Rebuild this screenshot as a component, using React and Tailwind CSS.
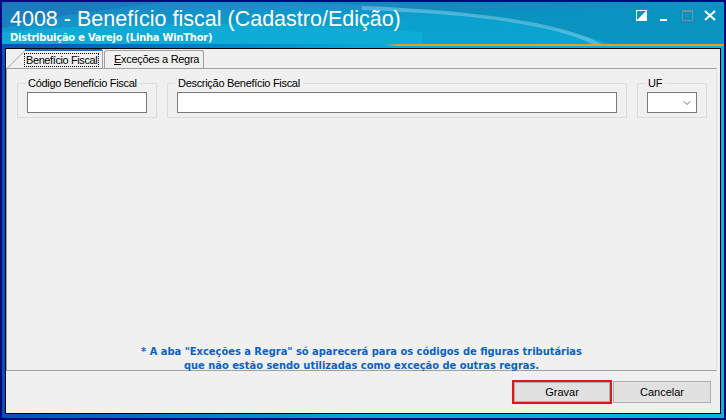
import { ChevronDown } from "lucide-react"

const font = { fontFamily: '"Liberation Sans", Arial, sans-serif' }
const boldFont = { fontFamily: '"DejaVu Sans Condensed", "DejaVu Sans", sans-serif' }

function TitleBar() {
  return (
    <div className="relative h-[42px] bg-gradient-to-br from-[#1c82c2] via-[#0aa0cf] to-[#0aa6d0] overflow-hidden">
      <svg className="absolute inset-0" width="722" height="42" viewBox="0 0 722 42">
        <path d="M0 30 C120 18 260 20 420 30 L420 42 L0 42 Z" fill="#10b6de" opacity="0.55" />
        <path d="M300 0 C420 6 520 14 610 42 L722 42 L722 0 Z" fill="#0a80ae" opacity="0.45" />
        <path d="M360 4 C470 8 560 20 600 42 L590 42 C550 22 470 12 360 8 Z" fill="#bfeaf6" opacity="0.35" />
        <path d="M0 0 L160 0 C100 8 40 16 0 26 Z" fill="#1b6ab4" opacity="0.45" />
      </svg>
      <div className="relative pl-[8px] pt-[5px] text-white">
        <div className="text-[21.5px] leading-[24px] whitespace-nowrap">4008 - Benefício fiscal (Cadastro/Edição)</div>
        <div className="text-[11px] leading-[13px] font-bold tracking-[-0.2px] whitespace-nowrap" style={boldFont}>
          Distribuição e Varejo (Linha WinThor)
        </div>
      </div>
      <div className="absolute right-[8px] top-[8px] flex items-center gap-[9px]">
        <svg width="11" height="11" viewBox="0 0 11 11">
          <rect x="0.5" y="0.5" width="10" height="10" fill="none" stroke="#fff" />
          <path d="M0 11 L11 0 L11 11 Z" fill="#fff" />
        </svg>
        <div className="w-[14px] h-[11px] flex items-end justify-center">
          <div className="w-[7px] h-[2px] bg-white" />
        </div>
        <div className="w-[16px] h-[11px] flex justify-center">
          <div className="w-[11px] h-[11px] border border-[#7a8c98] border-t-[2px]" />
        </div>
        <svg width="12" height="11" viewBox="0 0 12 11">
          <path d="M1 1 L11 10 M11 1 L1 10" stroke="#fff" strokeWidth="2" />
        </svg>
      </div>
    </div>
  )
}

function GroupBox({ label, className, children }) {
  return (
    <div className={"relative border border-[#dcdcdc] pt-[8px] pb-[4px] px-[9px] " + className}>
      <span className="absolute left-[7px] -top-[7px] px-[3px] bg-[#f0f0f0] text-[11px] leading-[13px] tracking-[-0.3px] whitespace-nowrap text-black">
        {label}
      </span>
      {children}
    </div>
  )
}

function Tabs() {
  return (
    <div className="flex items-end h-[19px] pl-[1px]">
      <div className="relative w-[96px] h-[19px]">
        <svg className="absolute inset-0" width="96" height="19" viewBox="0 0 96 19">
          <path d="M0 19 L18 1 L95 1 L95 19" fill="#f0f0f0" />
          <path d="M0.5 19 L18.5 1" stroke="#a0a0a0" />
          <path d="M95.5 1 L95.5 19" stroke="#a0a0a0" />
          <rect x="18" y="0" width="77" height="2" fill="#1e6fd0" />
        </svg>
        <span className="absolute left-[17px] top-[4px] h-[14px] px-[1px] border border-dotted border-black text-[11px] leading-[12px] tracking-[-0.4px] whitespace-nowrap text-black">
          Benefício Fiscal
        </span>
      </div>
      <div className="ml-[1px] h-[18px] w-[100px] border border-b-0 border-[#a0a0a0] rounded-t-[3px] bg-[#f0f0f0] text-[11px] leading-[16px] tracking-[-0.3px] whitespace-nowrap text-black pl-[9px]">
        <span className="underline">E</span>xceções a Regra
      </div>
    </div>
  )
}

export default function App() {
  return (
    <div className="w-[726px] h-[420px] bg-[#00087a] p-[2px] flex" style={font}>
      <div className="flex-1 flex flex-col bg-gradient-to-r from-[#0a50b8] via-[#0aa8d8] to-[#0ab4dc]">
        <TitleBar />
        <div className="h-[2px] bg-[linear-gradient(to_right,transparent_53%,#f39a1e_55%)]" />
        <div className="flex-1 mx-[3px] mt-[2px] mb-[4px] border border-black bg-[#f0f0f0] flex flex-col">
          <Tabs />
          <div className="w-[711px] h-[303px] border border-[#a0a0a0] border-r-[#e3e3e3] flex flex-col">
            <div className="flex pl-[10px] pt-[14px] gap-[10px]">
              <GroupBox label="Código Benefício Fiscal" className="w-[140px]">
                <div className="h-[21px] w-[120px] bg-white border border-[#7a7a7a]" />
              </GroupBox>
              <GroupBox label="Descrição Benefício Fiscal" className="w-[460px]">
                <div className="h-[21px] w-[440px] bg-white border border-[#7a7a7a]" />
              </GroupBox>
              <GroupBox label="UF" className="w-[70px]">
                <div className="h-[21px] w-[50px] bg-white border border-[#7a7a7a] flex items-center justify-end pr-[3px]">
                  <ChevronDown size={12} color="#444" strokeWidth={1.6} />
                </div>
              </GroupBox>
            </div>
            <div className="flex-1" />
            <div className="text-center text-[11px] leading-[14px] font-bold text-[#0a62c8] mb-[-3px]" style={boldFont}>
              <div>* A aba "Exceções a Regra" só aparecerá para os códigos de figuras tributárias</div>
              <div>que não estão sendo utilizadas como exceção de outras regras.</div>
            </div>
          </div>
          <div className="flex justify-end pr-[9px] pt-[9px]">
            <div className="border-2 border-[#e5141c]">
              <button className="block w-[96px] h-[20px] bg-[#e1e1e1] border border-[#adadad] text-[11px] leading-[18px] text-black">
                Gravar
              </button>
            </div>
            <button className="ml-[1px] mt-[1px] w-[98px] h-[22px] bg-[#e1e1e1] border border-[#adadad] text-[11px] leading-[20px] text-black">
              Cancelar
            </button>
          </div>
        </div>
      </div>
    </div>
  )
}
